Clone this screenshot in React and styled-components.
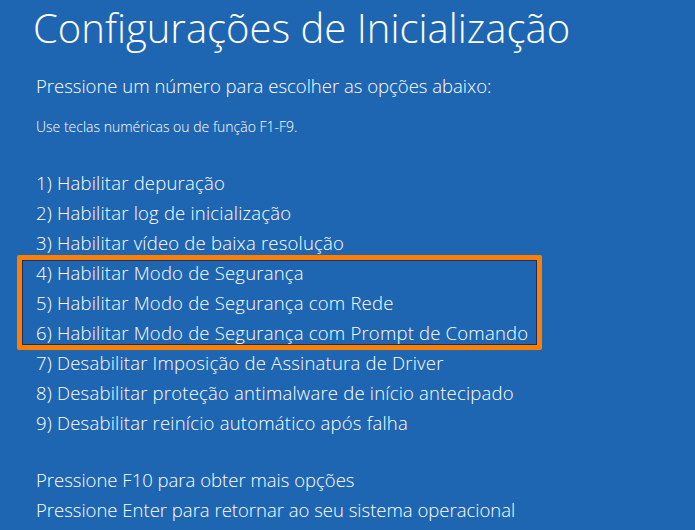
import React from "react";
import styled, { createGlobalStyle } from "styled-components";

const Global = createGlobalStyle`
  html, body { margin: 0; padding: 0; background: #1f66b2; }
  body { overflow: hidden; }
  #root { width: 695px; height: 530px; }
`;

const Screen = styled.div`
  width: 695px;
  height: 530px;
  background: #1f66b2;
  color: #ffffff;
  font-family: "Open Sans", "Noto Sans", sans-serif;
  font-weight: 350;
  padding-left: 36px;
  box-sizing: border-box;
  overflow: hidden;
`;

const Title = styled.h1`
  margin: 0 0 0 -3px;
  font-size: 40px;
  font-weight: 300;
  line-height: 56px;
  white-space: nowrap;
`;

const Prompt = styled.div`
  margin-top: 15px;
  font-size: 18.5px;
  line-height: 30px;
  white-space: nowrap;
`;

const Hint = styled.div`
  margin-top: 16px;
  font-size: 14px;
  line-height: 20px;
  white-space: nowrap;
`;

const List = styled.div`
  margin-top: 31px;
  display: flex;
  flex-direction: column;
`;

const Row = styled.div`
  font-size: 18.5px;
  line-height: 30px;
  height: 30px;
  white-space: nowrap;
  letter-spacing: ${(p) => (p.$option ? "0.2px" : "0")};
`;

const Highlight = styled.div`
  box-sizing: border-box;
  margin: -3px 0 -2px -19px;
  width: 525px;
  height: 95px;
  border: 5px solid #ff8000;
  border-radius: 2px;
  box-shadow: inset 0 0 0 1px #1b2f66;
  padding-left: 14px;
`;

const Inner = styled.div`
  margin-top: -2px;
  display: flex;
  flex-direction: column;
`;

const Footer = styled.div`
  margin-top: 27px;
  display: flex;
  flex-direction: column;
`;

const items = [
  "1) Habilitar depuração",
  "2) Habilitar log de inicialização",
  "3) Habilitar vídeo de baixa resolução",
];
const safe = [
  "4) Habilitar Modo de Segurança",
  "5) Habilitar Modo de Segurança com Rede",
  "6) Habilitar Modo de Segurança com Prompt de Comando",
];
const rest = [
  "7) Desabilitar Imposição de Assinatura de Driver",
  "8) Desabilitar proteção antimalware de início antecipado",
  "9) Desabilitar reinício automático após falha",
];

export default function App() {
  return (
    <>
      <Global />
      <Screen>
        <Title>Configurações de Inicialização</Title>
        <Prompt>Pressione um número para escolher as opções abaixo:</Prompt>
        <Hint>Use teclas numéricas ou de função F1-F9.</Hint>
        <List>
          {items.map((t) => (
            <Row $option key={t}>{t}</Row>
          ))}
          <Highlight>
            <Inner>
              {safe.map((t) => (
                <Row $option key={t}>{t}</Row>
              ))}
            </Inner>
          </Highlight>
          {rest.map((t) => (
            <Row $option key={t}>{t}</Row>
          ))}
        </List>
        <Footer>
          <Row>Pressione F10 para obter mais opções</Row>
          <Row>Pressione Enter para retornar ao seu sistema operacional</Row>
        </Footer>
      </Screen>
    </>
  );
}
